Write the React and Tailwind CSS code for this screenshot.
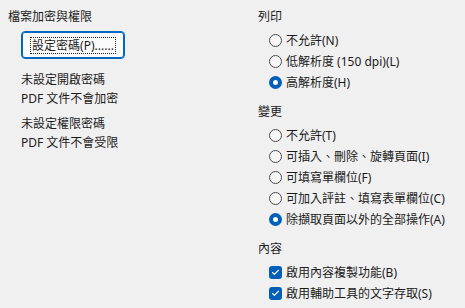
import { Check } from "lucide-react";

const FONT = {
  fontFamily: '"Noto Sans", "Noto Sans CJK TC", sans-serif',
};

const Radio = ({ checked, label }) => (
  <div className="flex h-[21px] items-center gap-[4px]">
    {checked ? (
      <span className="flex size-[13px] items-center justify-center rounded-full bg-[#005fb8]">
        <span className="size-[5px] rounded-full bg-white" />
      </span>
    ) : (
      <span className="size-[13px] rounded-full border border-[#4a4a4a] bg-[#f7f7f7]" />
    )}
    <span>{label}</span>
  </div>
);

const CheckBox = ({ label }) => (
  <div className="flex h-[21px] items-center gap-[4px]">
    <span className="flex size-[13px] items-center justify-center rounded-[3px] bg-[#005fb8]">
      <Check className="size-[9px] text-white" strokeWidth={3} />
    </span>
    <span>{label}</span>
  </div>
);

const Group = ({ title, children }) => (
  <div className="flex flex-col">
    <div className="h-[18px] leading-[18px]">{title}</div>
    <div className="mt-[4px] flex flex-col pl-[11px]">{children}</div>
  </div>
);

export default function App() {
  return (
    <div
      className="flex h-[308px] w-[465px] bg-[#f0f0f0] text-[12px] text-[#1b1b1b]"
      style={FONT}
    >
      <div className="flex w-[258px] flex-col pl-[8px] pt-[8px]">
        <div className="h-[18px] leading-[18px]">檔案加密與權限</div>
        <div className="ml-[13px] mt-[5px]">
          <button className="flex h-[28px] w-[104px] items-center justify-center rounded-[4px] border border-[#0067c0] bg-[#fbfbfb] shadow-[inset_0_0_0_1px_#0067c0]">
            <span className="border border-dotted border-[#222] px-[1px] leading-[15px]">
              設定密碼(P)......
            </span>
          </button>
        </div>
        <div className="ml-[13px] mt-[11px] leading-[19px]">
          <div>未設定開啟密碼</div>
          <div>PDF 文件不會加密</div>
        </div>
        <div className="ml-[13px] mt-[6px] leading-[19px]">
          <div>未設定權限密碼</div>
          <div>PDF 文件不會受限</div>
        </div>
      </div>
      <div className="flex flex-col gap-[10px] pt-[8px]">
        <Group title="列印">
          <Radio label="不允許(N)" />
          <Radio label="低解析度 (150 dpi)(L)" />
          <Radio checked label="高解析度(H)" />
        </Group>
        <Group title="變更">
          <Radio label="不允許(T)" />
          <Radio label="可插入、刪除、旋轉頁面(I)" />
          <Radio label="可填寫單欄位(F)" />
          <Radio label="可加入評註、填寫表單欄位(C)" />
          <Radio checked label="除擷取頁面以外的全部操作(A)" />
        </Group>
        <Group title="內容">
          <CheckBox label="啟用內容複製功能(B)" />
          <CheckBox label="啟用輔助工具的文字存取(S)" />
        </Group>
      </div>
    </div>
  );
}
